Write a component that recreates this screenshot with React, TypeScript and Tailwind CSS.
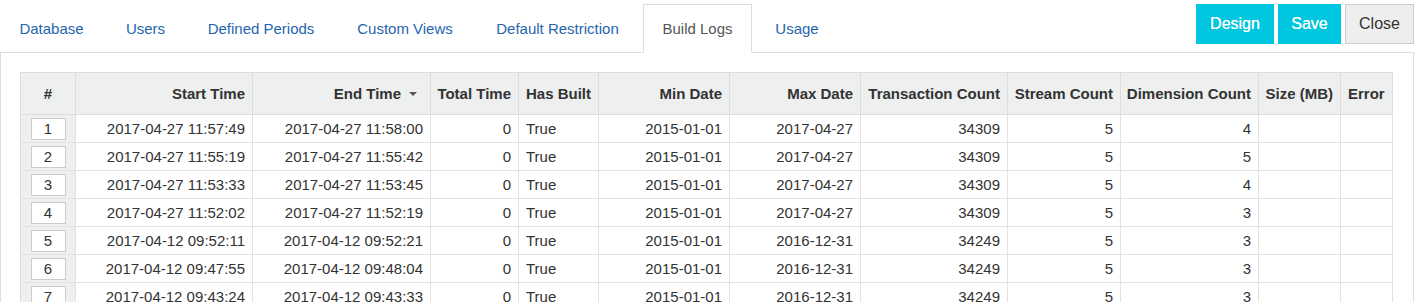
import React from "react";

const tabs = [
  { label: "Database", w: "w-[101px]" },
  { label: "Users", w: "w-[77px]" },
  { label: "Defined Periods", w: "w-[144px]" },
  { label: "Custom Views", w: "w-[134px]" },
  { label: "Default Restriction", w: "w-[161px]" },
  { label: "Build Logs", w: "w-[109px]", active: true },
  { label: "Usage", w: "w-[80px]" },
];

const rows = [
  ["2017-04-27 11:57:49", "2017-04-27 11:58:00", "2017-04-27", "34309", "4"],
  ["2017-04-27 11:55:19", "2017-04-27 11:55:42", "2017-04-27", "34309", "5"],
  ["2017-04-27 11:53:33", "2017-04-27 11:53:45", "2017-04-27", "34309", "4"],
  ["2017-04-27 11:52:02", "2017-04-27 11:52:19", "2017-04-27", "34309", "3"],
  ["2017-04-12 09:52:11", "2017-04-12 09:52:21", "2016-12-31", "34249", "3"],
  ["2017-04-12 09:47:55", "2017-04-12 09:48:04", "2016-12-31", "34249", "3"],
  ["2017-04-12 09:43:24", "2017-04-12 09:43:33", "2016-12-31", "34249", "3"],
];

const grid =
  "grid grid-cols-[55px_177px_178px_88px_80px_131px_131px_147px_113px_138px_82px_52px]";
const hcell =
  "h-[42px] flex items-center pt-[1px] bg-[#eeefef] border-r border-b border-[#dddddd] font-bold px-[7px] whitespace-nowrap";
const bcell =
  "h-[28px] flex items-center pt-[2px] border-r border-b border-[#e2e2e2] px-[7px] whitespace-nowrap";

export default function App() {
  return (
    <div className="w-[1414px] font-['Liberation_Sans',Arial,sans-serif] text-[15px] text-[#333] bg-white">
      <div className="flex h-[52px] items-start">
        <div className="flex gap-[5px] pl-[1px] mt-[4px] relative z-10">
          {tabs.map((t) =>
            t.active ? (
              <div
                key={t.label}
                className={`${t.w} h-[49px] flex items-center justify-center pt-[1px] bg-white border border-[#dddddd] border-b-white text-[#555]`}
              >
                {t.label}
              </div>
            ) : (
              <div
                key={t.label}
                className={`${t.w} h-[48px] flex items-center justify-center pt-[2px] text-[#1f66ad]`}
              >
                {t.label}
              </div>
            )
          )}
        </div>
        <div className="ml-auto flex gap-[4px] mt-[4px] text-[16px]">
          <button className="w-[78px] h-[40px] bg-[#00c6e0] text-white font-medium [text-shadow:0_0_0.4px_#fff]">Design</button>
          <button className="w-[63px] h-[40px] bg-[#00c6e0] text-white font-medium [text-shadow:0_0_0.4px_#fff]">Save</button>
          <button className="w-[69px] h-[40px] bg-[#eeeeee] border border-[#cccccc] text-[#333]">Close</button>
        </div>
      </div>
      <div className="border border-[#dddddd] pl-[19px] pt-[19px] h-[260px] overflow-hidden">
        <div className="w-[1373px] border-l border-t border-[#dddddd]">
          <div className={grid}>
            <div className={`${hcell} justify-center`}>#</div>
            <div className={`${hcell} justify-end`}>Start Time</div>
            <div className={`${hcell} justify-end gap-[8px] pr-[13px]`}>
              <span>End Time</span>
              <span className="w-0 h-0 border-l-[4px] border-r-[4px] border-t-[4px] border-l-transparent border-r-transparent border-t-[#555]" />
            </div>
            <div className={`${hcell} justify-end`}>Total Time</div>
            <div className={`${hcell} justify-start`}>Has Built</div>
            <div className={`${hcell} justify-end`}>Min Date</div>
            <div className={`${hcell} justify-end`}>Max Date</div>
            <div className={`${hcell} justify-end`}>Transaction Count</div>
            <div className={`${hcell} justify-end`}>Stream Count</div>
            <div className={`${hcell} justify-end`}>Dimension Count</div>
            <div className={`${hcell} justify-end`}>Size (MB)</div>
            <div className={`${hcell} justify-start`}>Error</div>
          </div>
          {rows.map((r, i) => (
            <div key={i} className={grid}>
              <div className="h-[28px] flex items-center justify-center border-r border-b border-[#e2e2e2] bg-[#eeefef]">
                <div className="w-[35px] h-[22px] pt-[1px] bg-white border border-[#cccccc] flex items-center justify-center">
                  {i + 1}
                </div>
              </div>
              <div className={`${bcell} justify-end`}>{r[0]}</div>
              <div className={`${bcell} justify-end`}>{r[1]}</div>
              <div className={`${bcell} justify-end`}>0</div>
              <div className={`${bcell} justify-start`}>True</div>
              <div className={`${bcell} justify-end`}>2015-01-01</div>
              <div className={`${bcell} justify-end`}>{r[2]}</div>
              <div className={`${bcell} justify-end`}>{r[3]}</div>
              <div className={`${bcell} justify-end`}>5</div>
              <div className={`${bcell} justify-end`}>{r[4]}</div>
              <div className={`${bcell}`}></div>
              <div className={`${bcell}`}></div>
            </div>
          ))}
        </div>
      </div>
    </div>
  );
}
